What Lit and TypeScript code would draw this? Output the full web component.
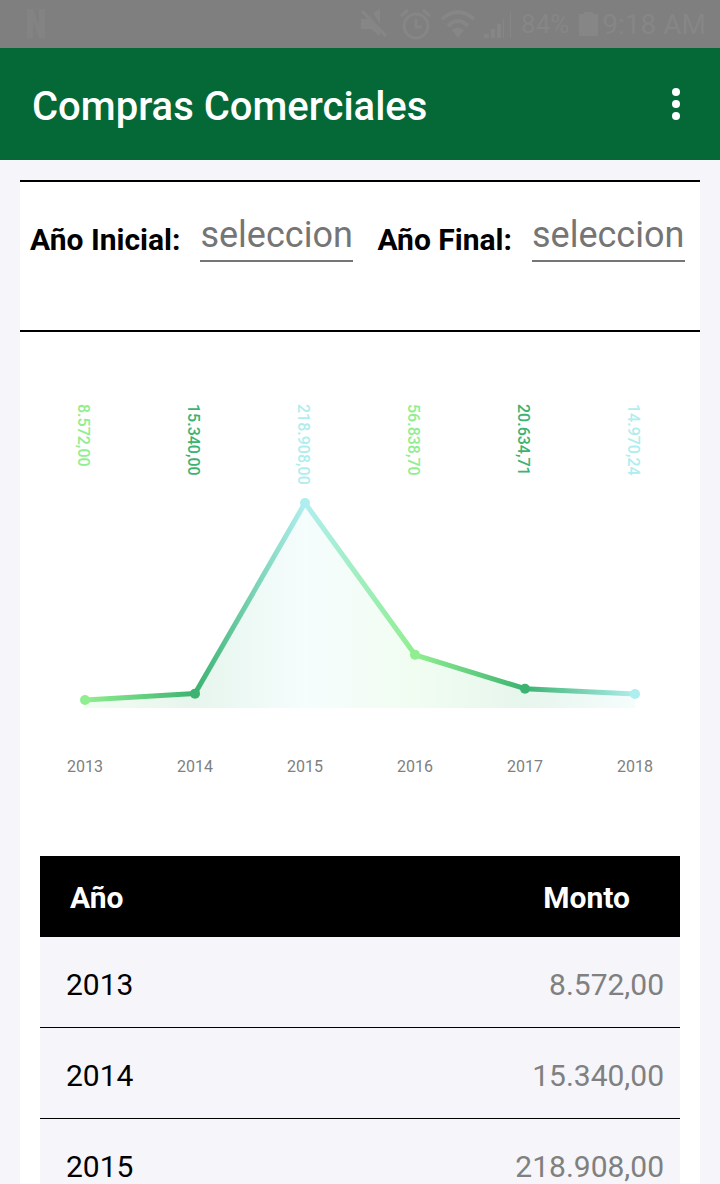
import { LitElement, html, svg, css } from "lit";
import { customElement, property } from "lit/decorators.js";

interface Purchase {
  year: number;
  amount: number;
  color: string;
}

const PURCHASES: Purchase[] = [
  { year: 2013, amount: 8572, color: "#90ee90" },
  { year: 2014, amount: 15340, color: "#3cb371" },
  { year: 2015, amount: 218908, color: "#afeeee" },
  { year: 2016, amount: 56838.7, color: "#90ee90" },
  { year: 2017, amount: 20634.71, color: "#3cb371" },
  { year: 2018, amount: 14970.24, color: "#afeeee" },
];

/** 218908 -> "218.908,00" */
function formatAmount(value: number): string {
  const [whole, cents] = value.toFixed(2).split(".");
  return `${whole.replace(/\B(?=(\d{3})+$)/g, ".")},${cents}`;
}

@customElement("status-bar")
class StatusBar extends LitElement {
  static styles = css`
    :host {
      display: flex;
      align-items: center;
      justify-content: space-between;
      height: 48px;
      padding: 0 14px 0 26px;
      background: #7f7f7f;
      color: #868686;
      fill: currentColor;
      stroke: none;
    }
    svg {
      display: block;
    }
    .notification {
      opacity: 0.6;
    }
    .group {
      display: flex;
      align-items: center;
    }
    .icons {
      display: flex;
      align-items: center;
      gap: 8px;
      margin-right: 8px;
    }
    .percent {
      font-size: 26px;
      margin-right: 10px;
    }
    .battery {
      margin-right: 4px;
    }
    .time {
      font-size: 28px;
    }
  `;

  render() {
    return html`
      <svg class="notification" width="20" height="32" viewBox="0 0 20 32" aria-hidden="true">
        <path d="M1 1h6l6 17V1h6v30l-6-1-6-17v17l-6 1z" />
      </svg>
      <div class="group">
        <div class="icons">
          <svg width="32" height="32" viewBox="0 0 32 32" aria-hidden="true">
            <path d="M2 11h6l3-3 10 15v5l-9-7H2z M14 5l7-4v15z" />
            <path d="M3 3l24 25" fill="none" stroke="currentColor" stroke-width="3" />
          </svg>
          <svg width="32" height="32" viewBox="0 0 32 32" fill="none" stroke="currentColor" stroke-width="3" aria-hidden="true">
            <circle cx="17" cy="18" r="12" />
            <path d="M17 11v8h6 M2 8l7-6 M31 8l-7-6" />
          </svg>
          <svg width="36" height="32" viewBox="0 0 36 32" fill="none" stroke="currentColor" stroke-width="4" aria-hidden="true">
            <path d="M3 11Q19-3 35 11 M9 18Q19 8 29 18" />
            <path d="M13 22Q19 17 25 22L19 30z" fill="currentColor" stroke="none" />
          </svg>
          <svg width="30" height="32" viewBox="0 0 30 32" aria-hidden="true">
            <path d="M1 26h5v4H1z M8 21h4v9H8z M14 16h4v14h-4z M20 11h1v19h-1z M27 4h1v26h-1z" />
          </svg>
        </div>
        <span class="percent">84%</span>
        <svg class="battery" width="19" height="24" viewBox="0 0 19 24" aria-hidden="true">
          <path d="M5 0h9v2h5v22H0V2h5z" />
        </svg>
        <span class="time">9:18 AM</span>
      </div>
    `;
  }
}

@customElement("app-header")
class AppHeader extends LitElement {
  static styles = css`
    :host {
      display: flex;
      align-items: center;
      justify-content: space-between;
      height: 112px;
      padding: 0 20px 0 32px;
      background: #056937;
      color: #fff;
    }
    .title {
      margin: 6px 0 0;
      font-size: 40px;
      font-weight: 500;
      line-height: 48px;
    }
    .menu {
      display: grid;
      place-items: center;
      width: 48px;
      height: 48px;
      padding: 0;
      border: 0;
      background: none;
      color: inherit;
      cursor: pointer;
    }
  `;

  render() {
    return html`
      <h1 class="title">Compras Comerciales</h1>
      <button class="menu" type="button" aria-label="Más opciones">
        <svg width="8" height="32" viewBox="0 0 8 32" fill="currentColor" aria-hidden="true">
          <circle cx="4" cy="4" r="4" />
          <circle cx="4" cy="16" r="4" />
          <circle cx="4" cy="28" r="4" />
        </svg>
      </button>
    `;
  }
}

@customElement("year-filter")
class YearFilter extends LitElement {
  static styles = css`
    :host {
      display: grid;
      grid-template-columns: auto 1fr auto 1fr;
      column-gap: 20px;
      align-items: start;
      padding: 28px 15px 68px 10px;
      border-top: 2px solid #000;
      border-bottom: 2px solid #000;
    }
    .label {
      padding-top: 12px;
      font-size: 30px;
      font-weight: 700;
      line-height: 36px;
      white-space: nowrap;
    }
    .second {
      padding-left: 4px;
    }
    .select {
      appearance: none;
      min-width: 0;
      width: 100%;
      height: 52px;
      padding: 0;
      border: 0;
      border-bottom: 2px solid #757575;
      border-radius: 0;
      background: none;
      color: #757575;
      font-family: inherit;
      font-size: 36px;
      line-height: 44px;
    }
  `;

  @property({ attribute: false }) years: number[] = [];

  private renderSelect(id: string) {
    return html`
      <select class="select" id=${id}>
        <option value="">seleccion</option>
        ${this.years.map((year) => html`<option value=${year}>${year}</option>`)}
      </select>
    `;
  }

  render() {
    return html`
      <label class="label" for="from">Año Inicial:</label>
      ${this.renderSelect("from")}
      <label class="label second" for="to">Año Final:</label>
      ${this.renderSelect("to")}
    `;
  }
}

@customElement("line-chart")
class LineChart extends LitElement {
  static styles = css`
    :host {
      display: block;
    }
    .chart {
      display: block;
      width: 100%;
      height: auto;
    }
    .value {
      font-size: 16px;
      font-weight: 500;
    }
    .year {
      font-size: 16px;
      fill: #808080;
      text-anchor: middle;
    }
  `;

  @property({ attribute: false }) data: Purchase[] = [];

  render() {
    const left = 65;
    const step = 110;
    const base = 376;
    const height = 205;
    const max = Math.max(...this.data.map((d) => d.amount));
    const points = this.data.map((d, i) => ({
      ...d,
      x: left + i * step,
      y: base - (d.amount / max) * height,
    }));
    const right = left + (points.length - 1) * step;
    const line = points.map((p) => `${p.x},${p.y.toFixed(1)}`).join(" ");

    return html`
      <svg class="chart" viewBox="0 0 680 524" role="img" aria-label="Compras por año">
        <defs>
          <linearGradient id="tint" gradientUnits="userSpaceOnUse" x1=${left} x2=${right} y1="0" y2="0">
            ${points.map(
              (p, i) => svg`<stop offset=${i / (points.length - 1)} stop-color=${p.color} />`
            )}
          </linearGradient>
        </defs>
        <polygon points="${left},${base} ${line} ${right},${base}" fill="url(#tint)" fill-opacity="0.125" />
        <polyline points=${line} fill="none" stroke="url(#tint)" stroke-width="5" stroke-linejoin="round" />
        ${points.map(
          (p) => svg`
            <circle cx=${p.x} cy=${p.y} r="5" fill=${p.color} />
            <text class="value" fill=${p.color} transform="translate(${p.x - 7} 72) rotate(90)">${formatAmount(p.amount)}</text>
            <text class="year" x=${p.x} y="440">${p.year}</text>
          `
        )}
      </svg>
    `;
  }
}

@customElement("purchase-table")
class PurchaseTable extends LitElement {
  static styles = css`
    :host {
      display: block;
      padding: 0 20px;
    }
    .table {
      width: 100%;
      border-spacing: 0;
      font-size: 30px;
      line-height: 36px;
      background: #f5f5fa;
    }
    .head {
      padding: 24px 50px 21px 30px;
      background: #000;
      color: #fff;
      font-weight: 700;
      text-align: left;
    }
    .cell {
      padding: 30px 16px 24px 26px;
      border-bottom: 1px solid #000;
      font-weight: 400;
      text-align: left;
    }
    .amount {
      text-align: right;
    }
    .cell.amount {
      color: #808080;
    }
  `;

  @property({ attribute: false }) data: Purchase[] = [];

  render() {
    return html`
      <table class="table">
        <thead>
          <tr>
            <th class="head" scope="col">Año</th>
            <th class="head amount" scope="col">Monto</th>
          </tr>
        </thead>
        <tbody>
          ${this.data.map(
            (d) => html`
              <tr>
                <th class="cell" scope="row">${d.year}</th>
                <td class="cell amount">${formatAmount(d.amount)}</td>
              </tr>
            `
          )}
        </tbody>
      </table>
    `;
  }
}

@customElement("app-root")
class AppRoot extends LitElement {
  static styles = css`
    :host {
      display: flex;
      flex-direction: column;
      height: 100vh;
      background: #f5f5fa;
      color: #000;
      font-family: Roboto, "Liberation Sans", sans-serif;
    }
    .content {
      flex: 1;
      min-height: 0;
      overflow-y: auto;
      scrollbar-width: none;
      padding: 20px 20px 0;
    }
    .panel {
      background: #fff;
    }
  `;

  render() {
    return html`
      <status-bar></status-bar>
      <app-header></app-header>
      <main class="content">
        <div class="panel">
          <year-filter .years=${PURCHASES.map((d) => d.year)}></year-filter>
          <line-chart .data=${PURCHASES}></line-chart>
          <purchase-table .data=${PURCHASES}></purchase-table>
        </div>
      </main>
    `;
  }
}
